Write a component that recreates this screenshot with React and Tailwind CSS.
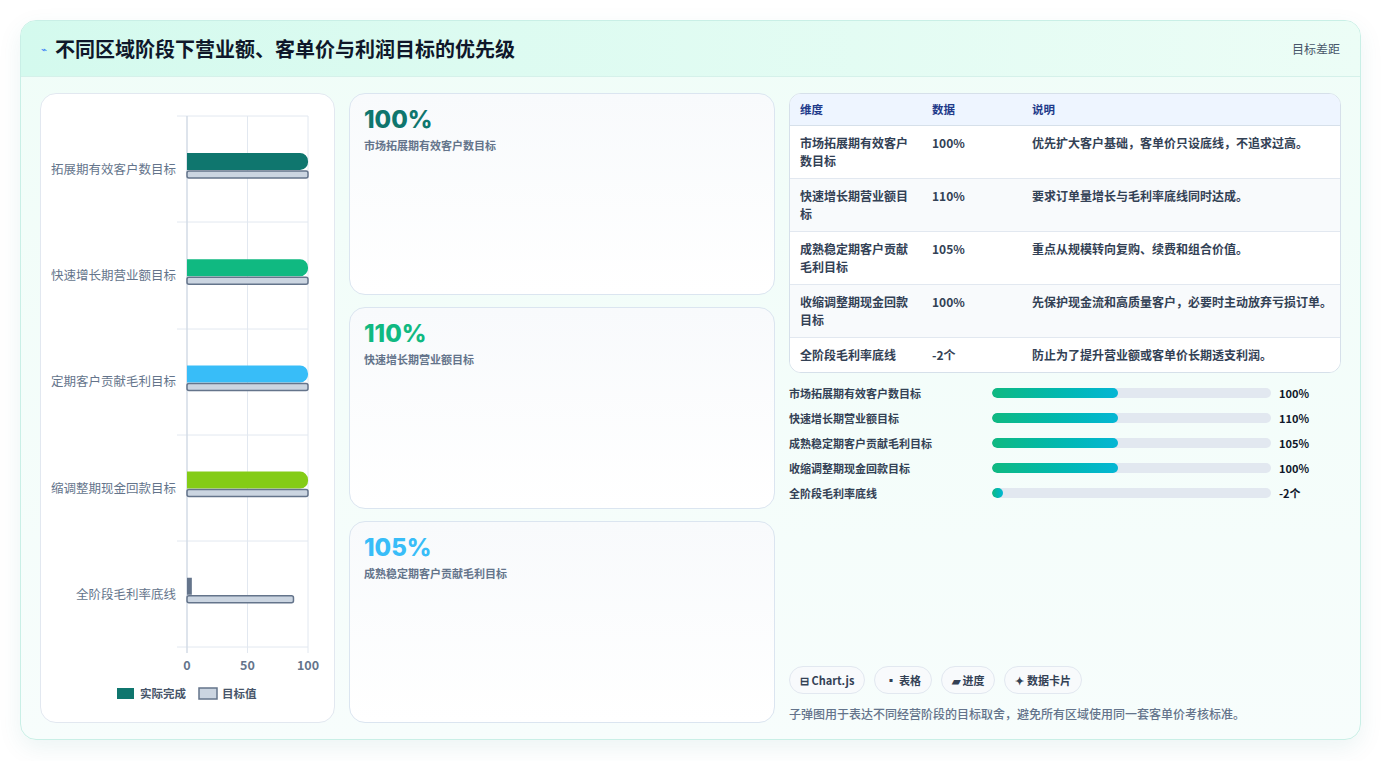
export default function App() {
  const font = { fontFamily: '"Noto Sans CJK SC", "Noto Sans", sans-serif' };
  const rows = [
    { label: '市场拓展期有效客户数目标', color: '#0f766e', v: 100, t: 100 },
    { label: '快速增长期营业额目标', color: '#10b981', v: 100, t: 100 },
    { label: '成熟稳定期客户贡献毛利目标', color: '#38bdf8', v: 100, t: 100 },
    { label: '收缩调整期现金回款目标', color: '#84cc16', v: 100, t: 100 },
    { label: '全阶段毛利率底线', color: '#64748b', v: 4, t: 88 },
  ];
  const cards = [
    ['100%', '市场拓展期有效客户数目标', 'text-[#0f766e]'],
    ['110%', '快速增长期营业额目标', 'text-[#10b981]'],
    ['105%', '成熟稳定期客户贡献毛利目标', 'text-[#38bdf8]'],
  ];
  const table = [
    ['市场拓展期有效客户数目标', '100%', '优先扩大客户基础，客单价只设底线，不追求过高。'],
    ['快速增长期营业额目标', '110%', '要求订单量增长与毛利率底线同时达成。'],
    ['成熟稳定期客户贡献毛利目标', '105%', '重点从规模转向复购、续费和组合价值。'],
    ['收缩调整期现金回款目标', '100%', '先保护现金流和高质量客户，必要时主动放弃亏损订单。'],
    ['全阶段毛利率底线', '-2个', '防止为了提升营业额或客单价长期透支利润。'],
  ];
  const prog = [
    ['市场拓展期有效客户数目标', 45, '100%'],
    ['快速增长期营业额目标', 45, '110%'],
    ['成熟稳定期客户贡献毛利目标', 45, '105%'],
    ['收缩调整期现金回款目标', 45, '100%'],
    ['全阶段毛利率底线', 4, '-2个'],
  ];
  const x0 = 136, x100 = 257, sc = (x100 - x0) / 100;
  return (
    <div className="w-[1381px] h-[761px] bg-white p-5 pb-0" style={font}>
      <div className="h-[720px] rounded-2xl border border-[#c9efe6] bg-gradient-to-b from-[#f0fdf8] to-[#f7fdfc] shadow-[0_8px_24px_rgba(15,118,110,0.08)] overflow-hidden flex flex-col">
        <div className="h-[56px] shrink-0 flex items-center justify-between px-5 bg-gradient-to-r from-[#d4faee] to-[#ecfdf6] border-b border-[#d5f1ea]">
          <div className="flex items-center gap-2">
            <span className="text-[10px] text-[#3b82f6]">⌁</span>
            <span className="text-[20px] font-bold text-[#0f172a]">不同区域阶段下营业额、客单价与利润目标的优先级</span>
          </div>
          <span className="text-[12px] text-[#475569]">目标差距</span>
        </div>
        <div className="flex-1 flex gap-[14px] px-[19px] pt-[16px] pb-[19px]">
          <div className="w-[295px] rounded-2xl border border-[#e2e8f0] bg-white overflow-hidden pt-[8px]">
            <svg width="284" height="620" className="block" style={{ marginLeft: 10 }}>
              {[x0, x0 + 50 * sc, x100].map((x, i) => (
                <line key={i} x1={x} x2={x} y1={14} y2={551} stroke="#e2e8f0" />
              ))}
              {[14, 120, 227, 333, 439, 545].map((y, i) => (
                <line key={i} x1={x0 - 10} x2={x100} y1={y} y2={y} stroke="#e2e8f0" />
              ))}
              <line x1={x0} x2={x0} y1={14} y2={551} stroke="#cbd5e1" />
              {rows.map((r, i) => {
                const cy = 67 + i * 106.2;
                return (
                  <g key={i}>
                    <text x={x0 - 11} y={cy + 5} textAnchor="end" fontSize="12.5" fill="#64748b">{r.label}</text>
                    <path d={`M${x0} ${cy - 16} H${x0 + r.v * sc - (r.v > 10 ? 8 : 0)} ${r.v > 10 ? `a8 8 0 0 1 8 8 a8 8 0 0 1 -8 9` : `V${cy + 1}`} H${x0} Z`} fill={r.color} />
                    <rect x={x0} y={cy + 2} width={r.t * sc} height={7} rx={2} fill="#cbd5e1" stroke="#64748b" strokeWidth="1.5" />
                  </g>
                );
              })}
              {[['0', x0], ['50', x0 + 50 * sc], ['100', x100]].map(([t, x]) => (
                <text key={t} x={x} y={568} textAnchor="middle" fontSize="12.5" fill="#64748b" fontWeight="600">{t}</text>
              ))}
              <rect x={66} y={586} width={17} height={11} fill="#0f766e" />
              <text x={89} y={596} fontSize="11.5" fill="#475569" fontWeight="600">实际完成</text>
              <rect x={148} y={586} width={18} height={11} fill="#cbd5e1" stroke="#64748b" strokeWidth="1.5" />
              <text x={171} y={596} fontSize="11.5" fill="#475569" fontWeight="600">目标值</text>
            </svg>
          </div>
          <div className="w-[426px] flex flex-col gap-3">
            {cards.map(([v, l, c]) => (
              <div key={l} className="flex-1 rounded-2xl border border-[#dbe5f0] bg-gradient-to-b from-[#f8fafc] to-white px-[14px] pt-[10px]">
                <div className={`text-[24px] font-extrabold leading-[32px] ${c}`} style={{ fontFamily: 'Inter, "Noto Sans CJK SC", sans-serif' }}>{v}</div>
                <div className="text-[11px] font-semibold text-[#64748b] mt-[1px]">{l}</div>
              </div>
            ))}
          </div>
          <div className="flex-1 flex flex-col">
            <div className="rounded-xl border border-[#d6e0ea] overflow-hidden bg-white">
              <div className="flex h-[32px] items-center bg-[#eef5ff] border-b border-[#d6e0ea] text-[11.5px] font-semibold text-[#1e3a8a]">
                <div className="w-[142px] pl-[10px]">维度</div>
                <div className="w-[100px]">数据</div>
                <div>说明</div>
              </div>
              {table.map((r, i) => (
                <div key={i} className={`flex py-[8px] text-[12px] font-semibold text-[#334155] leading-[18px] ${i < 4 ? 'border-b border-[#e2e8f0]' : ''} ${i % 2 ? 'bg-[#f8fafc]' : 'bg-white'}`}>
                  <div className="w-[142px] pl-[10px] pr-[22px]">{r[0]}</div>
                  <div className="w-[100px]">{r[1]}</div>
                  <div className="flex-1">{r[2]}</div>
                </div>
              ))}
            </div>
            <div className="mt-[11px] flex flex-col gap-[7px]">
              {prog.map(([l, p, v]) => (
                <div key={l} className="flex items-center h-[18px] text-[11px] font-semibold text-[#334155]">
                  <div className="w-[203px]">{l}</div>
                  <div className="w-[279px] h-[10px] rounded-full bg-[#e2e8f0] overflow-hidden">
                    <div className="h-full rounded-full bg-gradient-to-r from-[#10b981] to-[#06b6d4]" style={{ width: `${p}%` }} />
                  </div>
                  <div className="ml-[8px] text-[#0f172a]">{v}</div>
                </div>
              ))}
            </div>
            <div className="mt-auto flex gap-[9px]">
              {['⊟ Chart.js', '▪ 表格', '▰ 进度', '✦ 数据卡片'].map(t => (
                <span key={t} className="h-[28px] px-[10px] rounded-full border border-[#e2e8f0] bg-[#f8fafc] text-[11px] font-semibold text-[#334155] flex items-center">{t}</span>
              ))}
            </div>
            <div className="mt-[11px] text-[12px] text-[#64748b] font-medium">子弹图用于表达不同经营阶段的目标取舍，避免所有区域使用同一套客单价考核标准。</div>
          </div>
        </div>
      </div>
    </div>
  );
}
